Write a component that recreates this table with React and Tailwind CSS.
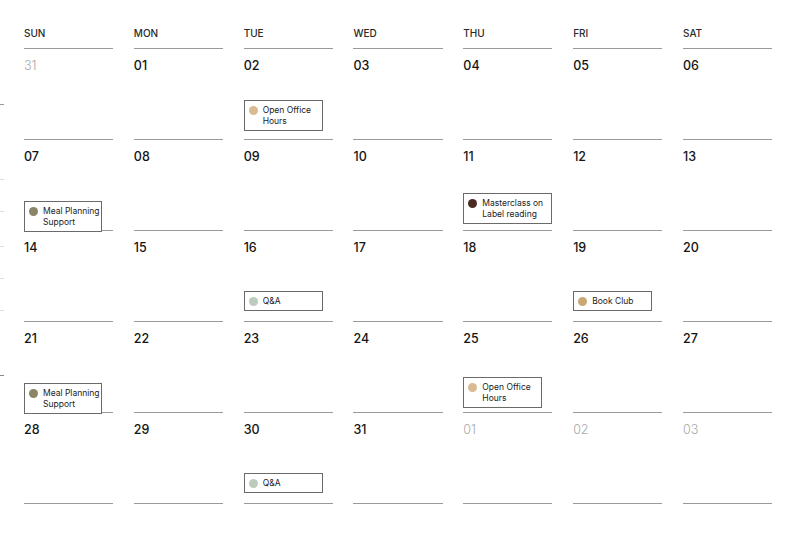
import React from "react";

const DAYS = ["SUN", "MON", "TUE", "WED", "THU", "FRI", "SAT"];

// each event sits at a hand-tuned offset below the date
const EVENTS = {
  "1-2": { title: ["Open Office", "Hours"], dot: "bg-[#d8bb92]", mt: "mt-[26px]", w: "w-[79px]" },
  "2-0": { title: ["Meal Planning", "Support"], dot: "bg-[#8b8567]", mt: "mt-[36px]", w: "w-[78px]" },
  "2-4": { title: ["Masterclass on", "Label reading"], dot: "bg-[#4b2a22]", mt: "mt-[28px]", w: "w-[89px]" },
  "3-2": { title: ["Q&A"], dot: "bg-[#bccbbb]", mt: "mt-[35px]", w: "w-[79px]" },
  "3-5": { title: ["Book Club"], dot: "bg-[#c9a777]", mt: "mt-[35px]", w: "w-[79px]" },
  "4-0": { title: ["Meal Planning", "Support"], dot: "bg-[#8b8567]", mt: "mt-[36px]", w: "w-[78px]" },
  "4-4": { title: ["Open Office", "Hours"], dot: "bg-[#d8bb92]", mt: "mt-[30px]", w: "w-[79px]" },
  "5-2": { title: ["Q&A"], dot: "bg-[#bccbbb]", mt: "mt-[35px]", w: "w-[79px]" },
};

const WEEKS = [
  [["31", true], ["01"], ["02"], ["03"], ["04"], ["05"], ["06"]],
  [["07"], ["08"], ["09"], ["10"], ["11"], ["12"], ["13"]],
  [["14"], ["15"], ["16"], ["17"], ["18"], ["19"], ["20"]],
  [["21"], ["22"], ["23"], ["24"], ["25"], ["26"], ["27"]],
  [["28"], ["29"], ["30"], ["31"], ["01", true], ["02", true], ["03", true]],
];

const TICKS = [
  "mt-[104px] bg-[#9a9a9a]",
  "mt-[74px] bg-[#dcdcdc]",
  "mt-[31px] bg-[#dcdcdc]",
  "mt-[34px] bg-[#dcdcdc]",
  "mt-[31px] bg-[#dcdcdc]",
  "mt-[31px] bg-[#dcdcdc]",
  "mt-[64px] bg-[#8a8a8a]",
];

function EventChip({ event }) {
  return (
    <div
      className={`relative z-10 ${event.mt} ${event.w} flex gap-[5px] border border-[#6a6a6a] bg-white pl-[4px] pt-[4px] pb-[3px]`}
    >
      <span className={`mt-[1px] h-[9px] w-[9px] shrink-0 rounded-full ${event.dot}`} />
      <span className="text-[8.5px] leading-[11px] text-[#222]">
        {event.title.map((line, i) => (
          <span key={i} className="block whitespace-nowrap">
            {line}
          </span>
        ))}
      </span>
    </div>
  );
}

export default function App() {
  return (
    <div
      className="flex h-[533px] w-[800px] items-start overflow-hidden bg-white"
      style={{ fontFamily: "Inter, 'Liberation Sans', sans-serif" }}
    >
      {/* stray ticks at the left edge */}
      <div className="flex w-[5px] shrink-0 flex-col">
        {TICKS.map((t, i) => (
          <div key={i} className={`h-px w-[4px] ${t}`} />
        ))}
      </div>

      <div className="ml-[19px] grid w-[748px] grid-cols-7 content-start gap-x-[20.8px]">
        {DAYS.map((d) => (
          <div
            key={d}
            className="flex h-[49px] items-end border-b border-[#9a9a9a] pb-[8px] text-[10px] font-medium leading-[14px] text-[#2a2a2a]"
          >
            {d}
          </div>
        ))}

        {WEEKS.map((week, w) =>
          week.map(([num, muted], c) => {
            const ev = EVENTS[`${w + 1}-${c}`];
            return (
              <div
                key={`${w}-${c}`}
                className="flex h-[91px] flex-col border-b border-[#9a9a9a] pt-[9px]"
              >
                <span
                  className={
                    muted
                      ? "text-[12.5px] font-light leading-[16px] text-[#a8a8a8]"
                      : "text-[12.5px] font-medium leading-[16px] text-[#151515]"
                  }
                >
                  {num}
                </span>
                {ev && <EventChip event={ev} />}
              </div>
            );
          })
        )}
      </div>
    </div>
  );
}
